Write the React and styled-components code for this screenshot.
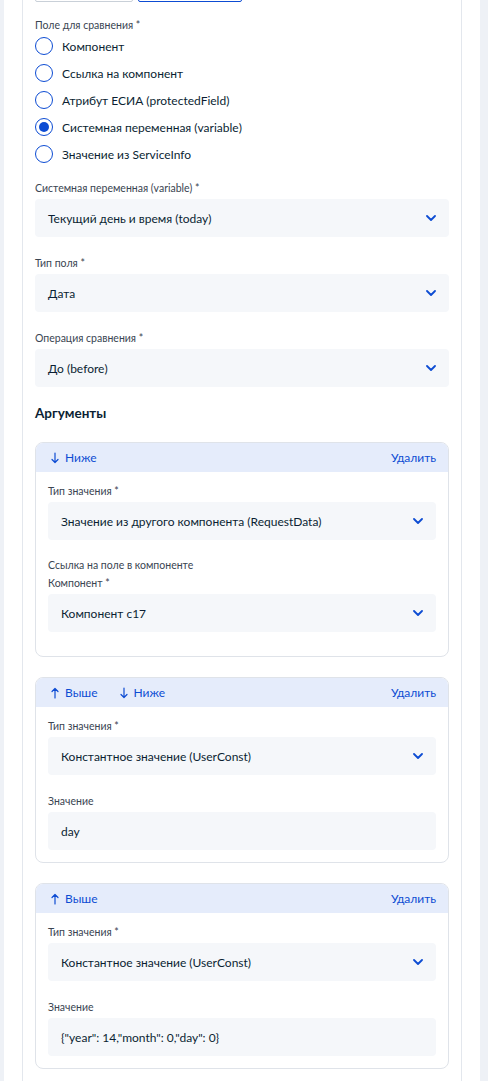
import React from 'react';
import styled, { createGlobalStyle } from 'styled-components';

const BLUE = '#0d4cd3';
const TEXT = '#0b1f33';

const GlobalStyle = createGlobalStyle`
  html, body { margin: 0; padding: 0; }
  body {
    background: #eef1f6;
    font-family: Lato, "Noto Sans", "Liberation Sans", sans-serif;
    color: ${TEXT};
    -webkit-font-smoothing: antialiased;
  }
`;

const Panel = styled.div`
  margin: 0 8px 0 4px;
  padding: 0 18px;
  background: #fff;
  min-height: 1081px;
  overflow: hidden;
`;

const Box = styled.div`
  border-left: 1px solid #e3e7ed;
  border-right: 1px solid #e3e7ed;
  padding: 0 12px 40px;
  min-height: 1081px;
  box-sizing: border-box;
`;

const ButtonRow = styled.div`
  display: flex;
  gap: 5px;
  margin-top: -34px;
`;

const GhostButton = styled.div`
  height: 36px;
  width: ${p => p.$w}px;
  box-sizing: border-box;
  border: 1px solid ${p => (p.$active ? BLUE : '#c9d0d8')};
  border-radius: 2px;
`;

const Label = styled.div`
  font-size: 10.5px;
  line-height: 18px;
  color: #3a4552;
  margin-bottom: ${p => p.$mb ?? 2}px;
`;

const Group = styled.div`
  margin-top: ${p => p.$mt}px;
`;

const RadioList = styled.div`
  display: flex;
  flex-direction: column;
  gap: 9px;
  margin-top: 3px;
`;

const RadioRow = styled.label`
  display: flex;
  align-items: center;
  gap: 9px;
  height: 18px;
  font-size: 12px;
  color: ${TEXT};
`;

const RadioCircle = styled.span`
  width: 18px;
  height: 18px;
  box-sizing: border-box;
  border-radius: 50%;
  border: 1.5px solid ${BLUE};
  display: flex;
  align-items: center;
  justify-content: center;
  flex: none;
  &::after {
    content: '';
    width: 10px;
    height: 10px;
    border-radius: 50%;
    background: ${BLUE};
    display: ${p => (p.$checked ? 'block' : 'none')};
  }
`;

const SelectBox = styled.div`
  height: 38px;
  background: #f5f7fa;
  border-radius: 4px;
  display: flex;
  align-items: center;
  justify-content: space-between;
  padding: 0 13px;
  font-size: 12px;
  color: ${TEXT};
`;

const Heading = styled.h3`
  margin: 16px 0 0;
  font-size: 13.5px;
  line-height: 20px;
  font-weight: 700;
  color: ${TEXT};
`;

const ArgList = styled.div`
  display: flex;
  flex-direction: column;
  gap: 20px;
  margin-top: 19px;
`;

const Card = styled.div`
  border: 1px solid #dfe3e9;
  border-radius: 8px;
  overflow: hidden;
`;

const CardHeader = styled.div`
  height: 29px;
  background: #e5ecfb;
  display: flex;
  align-items: center;
  padding: 0 12px 0 15px;
  font-size: 12px;
  color: ${BLUE};
`;

const Moves = styled.div`
  display: flex;
  gap: 22px;
  flex: 1;
`;

const Move = styled.span`
  display: flex;
  align-items: center;
  gap: 6px;
`;

const CardBody = styled.div`
  padding: 10px 12px ${p => p.$pb}px;
`;

const Chevron = () => (
  <svg width="10" height="6" viewBox="0 0 10 6" fill="none">
    <path d="M1 1l4 4 4-4" stroke={BLUE} strokeWidth="1.8" strokeLinecap="round" strokeLinejoin="round" />
  </svg>
);

const Arrow = ({ up }) => (
  <svg width="8" height="12" viewBox="0 0 8 12" fill="none" style={{ transform: up ? 'none' : 'rotate(180deg)' }}>
    <path d="M4 11V1.5M1 4.5l3-3 3 3" stroke={BLUE} strokeWidth="1.2" strokeLinecap="round" strokeLinejoin="round" />
  </svg>
);

const Select = ({ value }) => (
  <SelectBox>
    <span>{value}</span>
    <Chevron />
  </SelectBox>
);

const Field = ({ label, value, select = true, mt = 0 }) => (
  <Group $mt={mt}>
    <Label>{label}</Label>
    {select ? <Select value={value} /> : <SelectBox>{value}</SelectBox>}
  </Group>
);

const ArgCard = ({ up, down, pb = 12, children }) => (
  <Card>
    <CardHeader>
      <Moves>
        {up && <Move><Arrow up />Выше</Move>}
        {down && <Move><Arrow />Ниже</Move>}
      </Moves>
      <span>Удалить</span>
    </CardHeader>
    <CardBody $pb={pb}>{children}</CardBody>
  </Card>
);

const radios = [
  'Компонент',
  'Ссылка на компонент',
  'Атрибут ЕСИА (protectedField)',
  'Системная переменная (variable)',
  'Значение из ServiceInfo',
];

const App = () => (
  <>
    <GlobalStyle />
    <Panel>
      <Box>
        <ButtonRow>
          <GhostButton $w={98} />
          <GhostButton $w={104} $active />
        </ButtonRow>
        <Group $mt={14}>
          <Label $mb={0}>Поле для сравнения *</Label>
          <RadioList>
            {radios.map(r => (
              <RadioRow key={r}>
                <RadioCircle $checked={r.startsWith('Системная')} />
                {r}
              </RadioRow>
            ))}
          </RadioList>
        </Group>
        <Field mt={16} label="Системная переменная (variable) *" value="Текущий день и время (today)" />
        <Field mt={17} label="Тип поля *" value="Дата" />
        <Field mt={17} label="Операция сравнения *" value="До (before)" />
        <Heading>Аргументы</Heading>
        <ArgList>
          <ArgCard down pb={24}>
            <Field label="Тип значения *" value="Значение из другого компонента (RequestData)" />
            <Group $mt={16}>
              <Label $mb={0}>Ссылка на поле в компоненте</Label>
              <Label>Компонент *</Label>
              <Select value="Компонент c17" />
            </Group>
          </ArgCard>
          <ArgCard up down>
            <Field label="Тип значения *" value="Константное значение (UserConst)" />
            <Field mt={17} select={false} label="Значение" value="day" />
          </ArgCard>
          <ArgCard up>
            <Field label="Тип значения *" value="Константное значение (UserConst)" />
            <Field mt={17} select={false} label="Значение" value={'{"year": 14,"month": 0,"day": 0}'} />
          </ArgCard>
        </ArgList>
      </Box>
    </Panel>
  </>
);

export default App;
